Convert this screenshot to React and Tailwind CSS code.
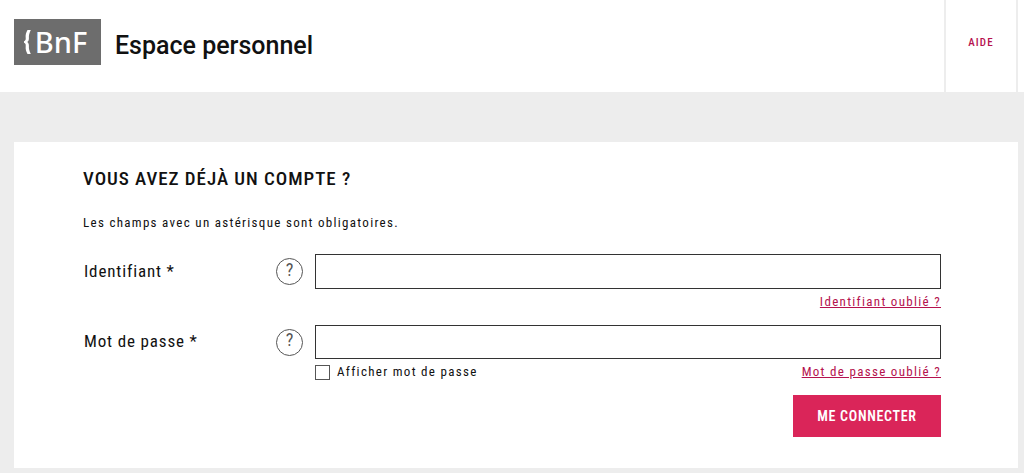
import React, { useState } from 'react';

const HelpButton = ({ label }) => (
  <button
    type="button"
    aria-label={label}
    className="w-[27px] h-[27px] shrink-0 ml-auto mr-3 rounded-full border border-[#555] text-[#555] text-lg leading-5 pb-1"
  >
    ?
  </button>
);

const Logo = () => (
  <a href="#" aria-label="BnF" className="flex items-center justify-center gap-1 w-[87px] h-[46px] pr-1 pb-0.5 bg-[#6d6d6d] text-white">
    <svg width="7" height="24" viewBox="0 0 7 24" fill="currentColor" className="mt-0.5" aria-hidden="true">
      <path d="M3.500 0H6.800C5.300 3 4.700 5.500 4.900 8C5 10 4.500 11 3.300 12C4.500 13 5 14 4.900 16C4.700 18.500 5.300 21 6.800 24H3.500C2 21.500 1.400 19 1.700 16C1.900 14.200 1.400 13.300 0 12.700V11.300C1.400 10.700 1.900 9.800 1.700 8C1.400 5 2 2.500 3.500 0Z" />
    </svg>
    <span className="font-['Noto_Sans','Open_Sans',sans-serif] text-[29px] font-medium leading-none">BnF</span>
  </a>
);

export default function App() {
  const [showPassword, setShowPassword] = useState(false);

  return (
    <div className="min-h-screen bg-[#ededed] text-[#111] font-['Roboto_Condensed','Roboto',sans-serif]">
      <header className="flex h-[92px] pl-3.5 pr-1.5 bg-white">
        <div className="flex items-center gap-3.5 pb-2">
          <Logo />
          <h1 className="font-['Roboto',sans-serif] text-[25px] font-medium pt-2">Espace personnel</h1>
        </div>
        <nav className="ml-auto w-[74px] border-x-2 border-[#ededed] flex">
          <a href="#" className="flex-1 flex items-center justify-center pb-1.5 text-[11px] font-medium tracking-widest text-[#b5124e]">AIDE</a>
        </nav>
      </header>

      <main className="pt-[50px] pl-3.5 pr-1.5 pb-1.5">
        <section className="bg-white pt-[25px] pl-[69px] pr-[77px] pb-[31px]">
          <h2 className="text-[19px] leading-6 font-medium tracking-wider">VOUS AVEZ DÉJÀ UN COMPTE ?</h2>
          <p className="mt-[22px] text-[13px] leading-5 tracking-widest">Les champs avec un astérisque sont obligatoires.</p>

          <form onSubmit={e => e.preventDefault()} className="mt-[21px]">
            <div className="flex items-center">
              <div className="flex items-center w-[232px] shrink-0">
                <label htmlFor="identifiant" className="pl-px text-[17px] tracking-wider">Identifiant *</label>
                <HelpButton label="Aide sur l'identifiant" />
              </div>
              <input id="identifiant" type="text" required className="flex-1 min-w-0 h-[35px] px-2 border border-[#333] bg-white" />
            </div>
            <div className="flex justify-end mt-[3px]">
              <a href="#" className="text-[13px] leading-5 tracking-widest text-[#b5124e] underline">Identifiant oublié ?</a>
            </div>

            <div className="flex items-center mt-[13px]">
              <div className="flex items-center w-[232px] shrink-0">
                <label htmlFor="motdepasse" className="pl-px text-[17px] tracking-wider">Mot de passe *</label>
                <HelpButton label="Aide sur le mot de passe" />
              </div>
              <input
                id="motdepasse" type={showPassword ? 'text' : 'password'} required
                className="flex-1 min-w-0 h-[34px] px-2 border border-[#333] bg-white"
              />
            </div>
            <div className="flex items-center justify-between mt-[3px] pl-[232px]">
              <label htmlFor="afficher" className="flex items-center gap-[7px] text-[13px] leading-5 tracking-widest">
                <input
                  id="afficher" type="checkbox" checked={showPassword}
                  onChange={e => setShowPassword(e.target.checked)}
                  className="appearance-none w-[15px] h-[15px] border border-[#555] bg-white checked:bg-[#555]"
                />
                Afficher mot de passe
              </label>
              <a href="#" className="text-[13px] leading-5 tracking-widest text-[#b5124e] underline">Mot de passe oublié ?</a>
            </div>

            <div className="flex justify-end mt-[13px]">
              <button type="submit" className="w-[148px] h-[42px] bg-[#da2559] text-white text-sm font-semibold tracking-wider">ME CONNECTER</button>
            </div>
          </form>
        </section>
      </main>
    </div>
  );
}
